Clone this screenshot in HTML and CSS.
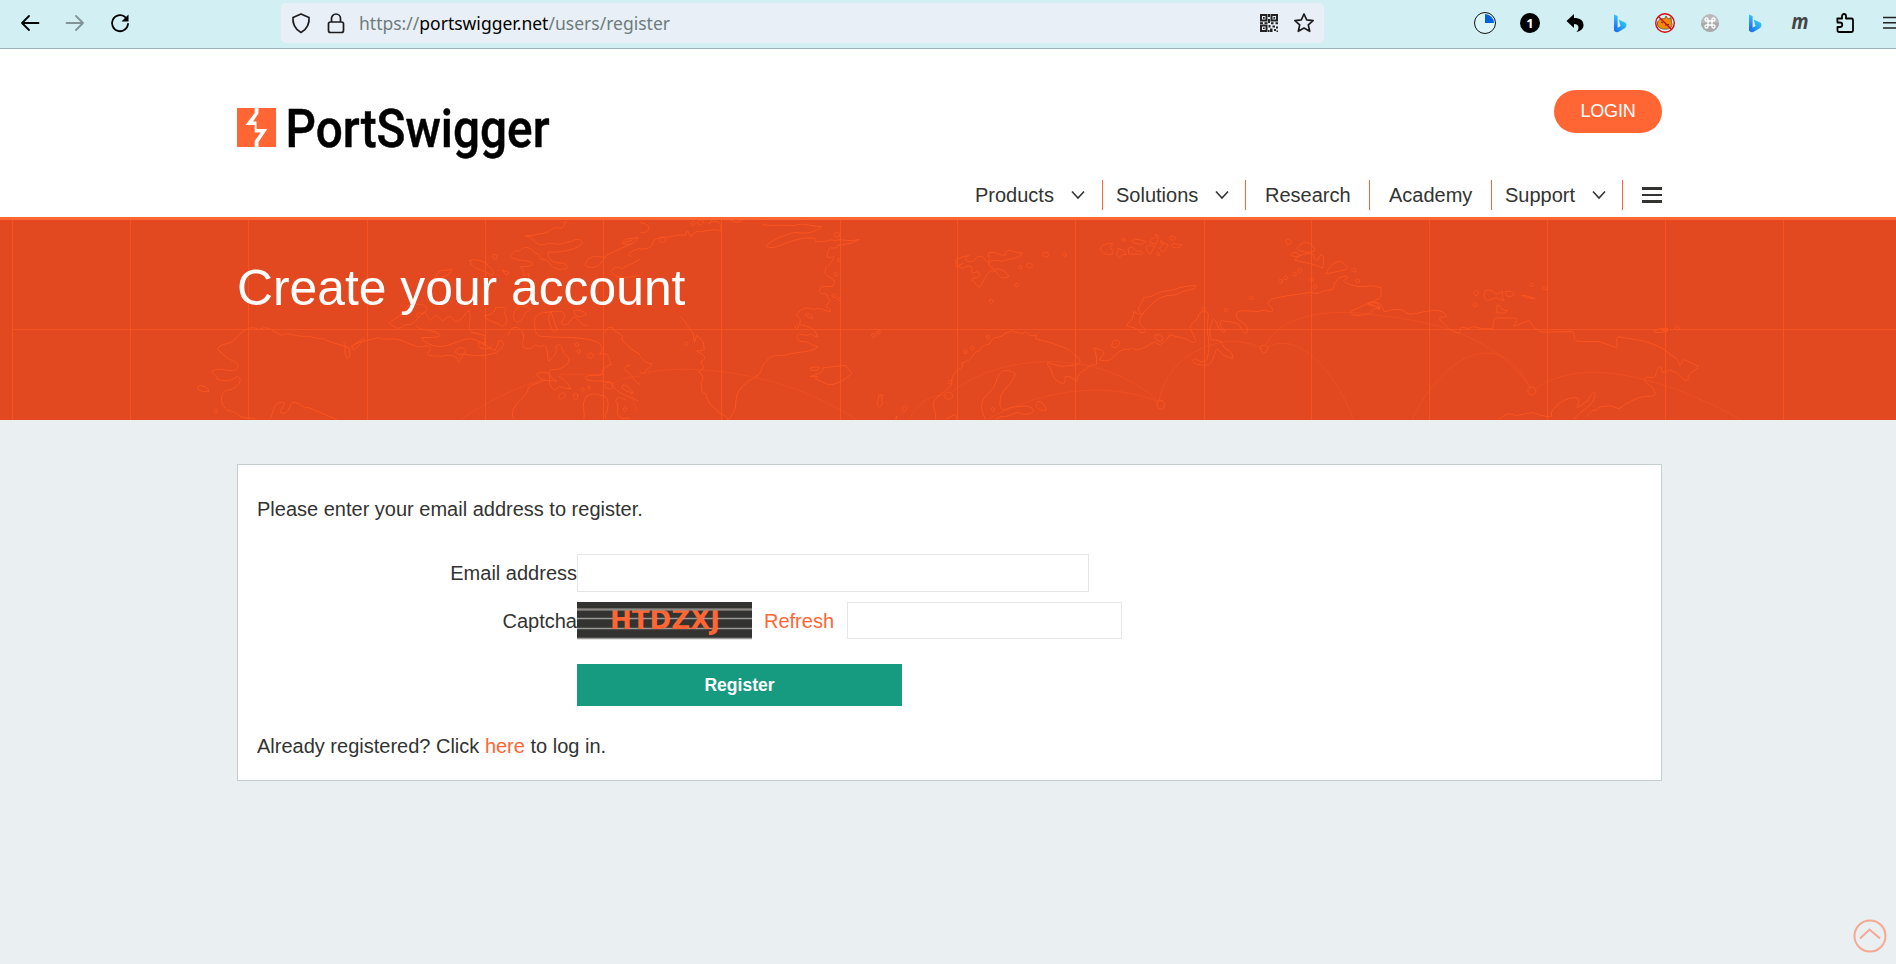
FILE: index.html
```html
<!DOCTYPE html>
<html lang="en">
<head>
<meta charset="utf-8">
<title>Create your account - PortSwigger</title>
<link rel="stylesheet" href="styles.css">
</head>
<body>
<svg class="defs" width="0" height="0">
  <defs>
    <linearGradient id="bingA" x1="0" y1="0" x2="0" y2="1"><stop offset="0" stop-color="#35c4ff"/><stop offset="1" stop-color="#1d5cf0"/></linearGradient>
    <linearGradient id="bingB" x1="1" y1="0" x2="0" y2="1"><stop offset="0" stop-color="#35d5f5"/><stop offset="1" stop-color="#1667f2"/></linearGradient>
    <symbol id="bing" viewBox="0 0 24 24"><path d="M6 3.600l3.600 1.300v12.600L6 20z" fill="url(#bingA)"/><path d="M11 8.800l6.200 2.600c1.200.6 1.400 1.700 1.200 3-.2 1.600-1.200 2.600-2.200 3.200l-5 3c-2.200 1.200-5.200.4-5.200-2.200l6.800-3.400-.8-1.600z" fill="url(#bingB)"/></symbol>
    <symbol id="caret" viewBox="0 0 14 10"><path d="M1 1.500l6 6.500 6-6.500" fill="none" stroke="#333332" stroke-width="1.600"/></symbol>
  </defs>
</svg>

<div class="toolbar">
  <div class="nav-buttons">
    <span class="slot"><svg width="24" height="24" viewBox="0 0 24 24" class="line"><path d="M20.500 12H4M11 5l-7 7 7 7"/></svg></span>
    <span class="slot"><svg width="24" height="24" viewBox="0 0 24 24" class="line muted"><path d="M3.500 12H20M13 5l7 7-7 7"/></svg></span>
    <span class="slot"><svg width="24" height="24" viewBox="0 0 24 24" class="line"><path d="M20 13a8 8 0 1 1-3.200-7.200L18.500 8"/><path d="M20.500 3.500v7h-7z" fill="#000" stroke="none"/></svg></span>
  </div>
  <div class="address">
    <svg class="shield" width="24" height="24" viewBox="0 0 24 24"><path d="M12 3l8 3.500c.6 5-1.500 11.500-8 15-6.500-3.500-8.600-10-8-15z"/></svg>
    <svg class="lock" width="24" height="24" viewBox="0 0 24 24"><path d="M7.500 11V7.500a4.500 4.500 0 0 1 9 0V11"/><rect x="4.500" y="11" width="15" height="10.500" rx="2"/></svg>
    <svg class="url" width="320" height="30" viewBox="0 0 320 30"><text x="0" y="21.500" textLength="311" lengthAdjust="spacingAndGlyphs">https://<tspan class="domain">portswigger.net</tspan>/users/register</text></svg>
    <svg class="qr" width="20" height="20" viewBox="0 0 20 20"><path d="M2 2h5.500v5.500H2zM12.500 2H18v5.500h-5.500zM2 12.500h5.500V18H2z" fill="none" stroke="#222" stroke-width="2"/><path d="M4 4h1.700v1.700H4zM14.400 4h1.700v1.700h-1.700zM4 14.400h1.700v1.700H4zM9 1h2v3H9zM9 6h2v4H9zM1 9.300h3v1.600H1zM5.500 9.300h3v1.600h-3zM12 9.300h2.500v2H12zM16.500 9.300H19v2h-2.500zM9.500 12h2v2.500h-2zM13.500 12.500H16v2h-2.500zM17 13.500h2v2h-2zM11 15.500h2.500v3.500H11zM15 16h2v2h-2zM17.500 17.500H19V19h-1.500zM9 17h1.500v2H9z" fill="#222"/></svg>
    <svg class="star" width="24" height="24" viewBox="0 0 24 24"><path d="M12 3l2.700 5.900 6.400.7-4.800 4.300 1.400 6.400L12 17.100l-5.700 3.200 1.400-6.400-4.800-4.300 6.400-.7z"/></svg>
  </div>
  <div class="extensions">
    <span class="slot"><svg width="24" height="24" viewBox="0 0 24 24"><circle cx="12" cy="12" r="10.500" fill="#dcf5f8" stroke="#111" stroke-width="1"/><path d="M12 12V3a9 9 0 0 1 9 9z" fill="#0061e0"/></svg></span>
    <span class="slot"><svg width="24" height="24" viewBox="0 0 24 24"><circle cx="12" cy="12" r="10" fill="#000"/><text x="12" y="16.800" class="count">1</text></svg></span>
    <span class="slot"><svg width="24" height="24" viewBox="0 0 24 24"><path d="M3.500 10l7.500-7v4c6 0 9.500 2.500 9.500 7 0 3-1.500 5.500-7 7 3-3 3-8-2.500-8v4z" fill="#000"/></svg></span>
    <span class="slot"><svg width="24" height="24"><use href="#bing"/></svg></span>
    <span class="slot"><svg width="24" height="24" viewBox="0 0 24 24"><path d="M4.500 11c2-3 5-4 7-3l1.500-3 2 3 3-1.500.5 5c1.500 3-.5 6-4.500 6.500-5 .6-8.500-1-9.500-4z" fill="#f28a0d" stroke="#784716" stroke-width=".8"/><path d="M12 14l4-.5M8 11l2 1" stroke="#553018"/><circle cx="12" cy="12" r="9.300" fill="none" stroke="#d40b12" stroke-width="1.400"/><path d="M5.500 5.500l13 13" stroke="#d40b12" stroke-width="1.400"/></svg></span>
    <span class="slot"><svg width="24" height="24" viewBox="0 0 24 24"><circle cx="12" cy="12" r="9" fill="#b9b9b9"/><path d="M3 12a9 9 0 0 0 18 0z" fill="#a9a9a9"/><path d="M10 10H8.500A1.500 1.500 0 1 1 10 8.500v7A1.500 1.500 0 1 1 8.500 14h7a1.500 1.500 0 1 1-1.500 1.500v-7a1.500 1.500 0 1 1 1.500 1.500H10" fill="none" stroke="#fff" stroke-width="1.400"/></svg></span>
    <span class="slot"><svg width="24" height="24"><use href="#bing"/></svg></span>
    <span class="slot"><svg width="24" height="24" viewBox="0 0 24 24"><text x="12" y="18" class="letter-m" textLength="17" lengthAdjust="spacingAndGlyphs">m</text></svg></span>
    <span class="slot"><svg width="24" height="24" viewBox="0 0 24 24" class="line"><path d="M4.300 7.500h4.700V5a2 2 0 0 1 4 0v2.500h5.500a1.500 1.500 0 0 1 1.500 1.500v10.500a1.500 1.500 0 0 1-1.500 1.500H6a1.500 1.500 0 0 1-1.500-1.500V16H7a2.200 2.200 0 0 0 0-4.500H4.500z"/></svg></span>
    <span class="slot"><svg width="18" height="24" viewBox="0 0 18 24"><path d="M0 6.500h18M0 11.800h18M0 17h18" stroke="#222" stroke-width="1.500"/></svg></span>
  </div>
</div>

<header class="header">
  <div class="container header-inner">
    <a class="logo" aria-label="PortSwigger">
      <svg width="330" height="76" viewBox="0 0 330 76">
        <rect y="6" width="39" height="39" fill="#ff6633"/>
        <path d="M17.700 6h3.800v5.500L16 19.500h3.500V27h10.700L21.500 40v5h-3.800v-6l6-8.500h-6v-7.500H8.500l9.200-12z" fill="#fff"/>
        <text x="48.500" y="45" class="wordmark" textLength="264" lengthAdjust="spacingAndGlyphs">PortSwigger</text>
      </svg>
    </a>
    <div class="header-right">
      <a class="login">LOGIN</a>
      <nav class="menu">
        <a class="item products">Products<svg class="caret" width="14" height="10"><use href="#caret"/></svg></a>
        <a class="item solutions">Solutions<svg class="caret" width="14" height="10"><use href="#caret"/></svg></a>
        <a class="item research">Research</a>
        <a class="item academy">Academy</a>
        <a class="item support">Support<svg class="caret" width="14" height="10"><use href="#caret"/></svg></a>
        <span class="burger"><i></i><i></i><i></i></span>
      </nav>
    </div>
  </div>
</header>

<section class="hero">
  <svg class="map" width="1896" height="200" viewBox="0 220 1896 200">
    <path class="grid-line" d="M12.500 329.500H1896M12.500 220v200M130.500 220v200M248.500 220v200M367.500 220v200M485.500 220v200M603.500 220v200M721.500 220v200M840.500 220v200M957.500 220v200M1075.500 220v200M1204.500 220v200M1311.500 220v200M1429.500 220v200M1547.500 220v200M1665.500 220v200M1783.500 220v200"/>
    <g transform="translate(0 210) scale(.4082 .3333)">
      <path class="coast" d="M625 628c-10-8-25 0-35-8s-20-20-30-17c-25-20-20-55-5-62 20 0 45-30 27-42-20 20-40 13-50 8-2-15-20-18-10-26 15-10 35 5 55-1 20-20-10-26-22-38l-23-25c10-20 30-12 40-25 18-25 40-50 62-33 22-15 30 3 55 17 20-12 25 5 70 3 20 10 30 2 40 12l55 22c6 20 4 30-4 32-10-20 0-30-8-48M860 410l30-25c8 0-8 18-20 32-12 6-10-10 10-20l48-14c15 10 35-2 55 8s35 20 50 20c18-10 25 5 20 10-15 20 10 16 30 18 20-8 38 1 38 10 0 20 5 0 20-26-2-8-8-12-20-8-10 15-5 20 20 18 25 8 70 3 80-10 20-20 13-30 2-32l-10 30c-20-5-25-30-42-22-3 20 30 25 35 5"/>
      <path class="coast" d="M660 628c10-10 8-50 25-50 25-5 0 20 2 30 20 10 20-20 30-30 20-3 20 18 40 15l68 36M484 530c10-8 30 4 27 15-20 1-28-6-27-15zM525 600c5-5 10 0 7 7-6 5-10-2-7-7zM1026 322c-15-5 0-20 10-10 20-20 6-30-18-29-30-1-17 15-35 30-20 20-40 25-20 35 20 20 26-10 37-4 15 1 20-20 40-38 10 10 10 40 22 15 15-15 20 28 28 5 20-20 20 15 30 8 15-5 20-30 30-32 6 30-8 50 5 65l35 10c-4 10-5 20 0 32-40-45-60-10-105 0-25 2-45-10-53-26 50 0 55-5 35-17-20-8-40-5-48-20"/>
      <path class="coast" d="M1388 32c-10 10-2 25-20 22-20-5-20 18-45 17-15 5-20 7-37 6 20 5 20 15 30 24 20 10 20-5 40 0 20 5 25-4 45-7 15-15 35 0 20 12-15 15-50 22-78 20-3 20 10 35 35 33 20 10 15 20-10 19-30-10-15-25-38-30-10-2-5-15-20-20-30-40-35 10-45-8-15 20-20 20 5 30 40 2 50 20 5 20 20 30-5 35 20 20 5 30-18 40-6 45 5 5 15 15 25 13M1150 152c20-8 40 4 50 20 15 20 15 30-10 15s-30-10-40-35zM1076 183l30-5c-2 25-30 20-50 35 10-10 15-18 20-30zM1207 135c8-8 15 9 8 13-6 0-10-8-8-13zM1230 180l18 8-8 8zM1215 292c25-1 30 3 20 15 8 20 12 30-5 43-10-15-40-15-43-33 10-3 20 0 28-25zM1267 293c15-8 50 0 20 15-5 20-20 40-27 20-5-15 0-25 7-35zM1405 300c15-2 25 5 33 12-15 10-30 15-33-12zM1350 305l15 55c-5 10-10 10-15-10-10-20-5-35 0-45zM1310 345c-5-20 5-38 30-38 40-10 55 3 35 28 0 10 10 15 20 1 20-40 20 18 45 9M1310 345c0 20 5 35 18 34 40 5 80 0 120 11 30 10 33 28 20 43 30-8 20 15 30 30-25 10-25 25-20 30-20 8-40-2-45 10 10 20 50 0 65 20 15 30 35 30 65 50M1246 375c5-30 25-30 35-5 5 25 0 20-2 30 0 20 15 15 20 16 20-20 10-10 25-5 20-20 15 30 20 42 20-20 20-30 18-45 20-15 10 25 32 35 5 25-30 40-43 35-15 10 2 30 13 35-20-3-35 5-50-20 10-10 30-7 33 3 0 20-5 30 12 45 15-20 10-5 40-5-10-20-15-25-30-38M1335 508c-8 13-30 11-40 25-5 30-30 40-38 67-2 10-3 20 3 28M1430 628c5-30-10-40 8-70 15-10 25-5 35-2 20 0 20 35 10 60 0 10 5 10 2 12M1545 628c-5-10-20 5-30-10-8-10 5-30-7-45 10-20 15-5 25-5"/>
      <path class="coast" d="M1436 155c-10 18 15 18 20 17 20-10 25-30 30-37 20-10 50-30 65-35M1525 100c5-20 15-10 38-18-5 15-20 28-38 18zM1530 97l20-7M1568 115c-20 7-40 20-20 24M1436 155c10-20 25-15 45-13M1495 185c10-10 15-20 28-8 10-10 20-10 45-30M1498 187c20 20 25 20 70 8M1480 365c10 5 0-15 20-13 0 15 15 10 25 27-5 15 10 20 18 35l25 20M1545 465c-20 5-18 15-5 23 10 10 15 30 28 35M1525 525c15 0 20 15 27 25-20-8-30-10-27-25z"/>
      <path class="coast" d="M1410 400c8-6 10 8 3 10-5-2-5-6-3-10zM1415 420c8-6 10 8 3 10-5-2-5-6-3-10zM1442 432c12-10 16 8 6 13-8-2-12-8-6-13zM1370 555c10-12 20-4 13 5-10 13-20 5-13-5zM1406 553c5-8 10 0 9 10-3 12-11 10-9-10zM1425 535c5-3 8 0 5 8-7 3-9-3-5-8zM1440 530c5-4 8 0 6 6-6 4-8-1-6-6zM1490 515c15 0 15 20 3 22-15 0-12-20-3-22zM1528 595c8-5 10 5 4 10-6-2-6-6-4-10z"/>
      <path class="coast route" d="M1130 628c60-50 130-95 205-120M1370 493h105M1500 520c20-12 40-20 68-22M1545 545l15 60"/>
    </g>
    <g transform="translate(640 210) scale(.4017 .3333)">
      <path class="coast" d="M0 38c20 2 25 15 20 23-10 10-15 5-20 8M0 117c25 0 30-5 32-22 15-20 30-10 45-15 20-5 30-8 35-2 10-30 5-10 15 2 15-25 20-10 35-17 20-5 30-5 40 0V45c-10-15-20-15-30-3 0-8 10-10 7-12M50 85c10-8 20 4 12 10-10 5-18-2-12-10zM128 37c10-8 12 6 6 9-6 1-8-5-6-9zM147 32c12-6 15 5 6 11-10 2-12-5-6-11zM225 30l15 7 15-7M302 40c5 10 40 3 80 7 30-10 30 0 70 3-20 20-40 22-65 17-25 5-70 30-72 42 10 8 25 2 45-8 35-15 50-20 77-16 5 10-10 15 12 8 10 8 25-10 35 0 20-10 30 5 62-5-20 15-45 15-55 20 5 5-8 8-18 5-10 15-5 25-8 28 20 5 18-10 17 5-5 15-20 25-20 30-5 20 5 20 10 26 20 10 10 20 8 28-20 0-30-5-34 12 10 20 15 0 20 15 0 10 15 15 0 24-5 20 10 10 8 24-20-5-30-15-40-6-20-10-30-5-45 15 10 15 12 8 8 30 20 5 40 8 45 37-20-5-5-10-30-5-30-10-22 10-15 18 30 0 25 12 46 16-20 20-40 12-80 25-30 5-30-5-50 20-10 10-10 30-15 35-20 25-25 10-50 50-15 20-5 60-17 70-10 20-10 20-12 20-5-20-15-10-28-30-20-20-20-20-28-50-15 3-5-20-12-30 10-15 5-25-5-35 20-10 10-20 5-30 20-12 5-22-10-32 10-2 22 0 18-12 2-20-15-30-18-35l-5 20c-5-10 0-15-5-30-20-20-10-25-30-45"/>
      <path class="coast" d="M413 312c10-5 15 8 18 13-10 0-18-5-18-13zM387 347c5-8 10 0 6 8-8 0-8-5-6-8zM484 70c8-8 15 0 12 8-8 8-15 0-12-8zM493 147c8-3 10 5 3 8-5-2-5-5-3-8zM483 190c7-8 12 4 5 8-5 1-6-4-5-8zM478 256c5-10 12 0 8 6-5 2-7-2-8-6zM493 265c7-4 9 3 4 8-5-1-6-4-4-8zM110 400c5-8 12-3 9 5-5 3-9 0-9-5zM0 440c10 8 5 15 30 22-5 15-15 12-17 25-8 8-10-2-13-5M423 480c0-8 15-12 24-7-2 10-15 10-24 7zM423 500c20-10 35-10 32-26 20-3 30-5 57-8l15 25c-10 10-20 22-45 32-20 5-25-10-45-15 0-10 10-2 5-8zM595 557l8-3-1 18c5 8-5 30-13 10 5-10 3-15 6-25zM655 590c8-8 15 8 3 14-5-2-8-8-3-14zM577 373c8-6 13 4 5 9-6 0-7-5-5-9zM590 364c7-6 12 3 5 7-7-1-8-3-5-7z"/>
      <path class="coast" d="M787 150c15-12 20-10 32-13-20 10-2 20 7 18 10-2 5-16 20-15 10-3 10 10 20 18 10-15-5-20 3-30 20-3 25 8 40 8 5-30 20-5 43-7-10 20-30 15-50 25-20-3-20-5-30 0l-5 10 16 15c20-10 35 20 35 20-12 10-20 3-25-2-5-18-20-15-20-15-20 25-15 30-28 50-15-10-10-20-20-20-5-10 30-5 18-25-10-5-15 10-18-2 10-20-15-20-20-10-20-3-20-20-18-25zM785 170l20-10M1002 130c8-8 18 0 15 7-5 10-18 0-15-7zM1052 130c5-6 12 1 8 8-7 3-9-4-8-8zM963 163c10-10 18 4 10 10-8 2-12-4-10-10zM943 169c5-9 12 3 5 9-5 0-6-5-5-9zM934 222c8-6 12 5 4 9-5-1-5-5-4-9zM870 271c6-8 12 4 5 9-5-1-6-5-5-9zM1145 118c5-15 15-18 32-17-15 12 5 20 0 30-15 10-25-5-32-13zM1190 115c15 5 20 12 20 20-15-8-15 20-23 0-5-5 5-10 3-20zM1215 115c20-10 12 14 32 8 20 15-20 7-30 10zM1260 112c5-10 10-5 22-3-5 10-8 18-13 24-8-5-5-15-9-21zM1225 95c0-15 20-5 35 0-10 10-20 10-35 0zM1269 98c5-20 15-5 15-25 10 5 5 15 0 30zM1293 115c15-20 10-15 22-10-5 10-10 22-15 20zM1323 106c10-12 10 0 26-2-3 10-20 15-26 2zM1320 80c10-5 18 4 10 10-10 1-13-5-10-10zM1295 93c8-5 10 8 3 9zM1200 87c6-6 12 2 8 8-7 1-8-4-8-8zM1286 130c5-5 10 2 6 8-6 0-7-4-6-8z"/>
      <path class="coast" d="M1254 262c30 0 30-20 65-20 20-5 30-15 65-15 0 15-20 7-50 28-40 0-50 15-75 45-20 30-15 30-15 42 20 20 20 30 0 24-15-20-20-10-32-20 12-20 15-12 17-42 10 10 15 8 21 10-20-20 0-30 4-52zM735 628c5-20-15-50 5-65 20-25 18-15 25-28 20-12 5-15 15-40 10-20 30-20 20-35 40-15 20-30 45-38 10-20 15-15 25-20 10-30 20-12 35-28 10-10 12-5 20-12 15 10 10 0 25 10 20-20 10 15 38 3-15 20 20 12 50 30 40 15 30 20 55 40 10 20-10 20-40 24-25-2-45-20-37-3 15 20 5 35 27 50 20 15 15-15 15-15 10-8 25 10 30 13 0-30 15-25 30-45 10-10 15 0 18-5 3-30-5-40-5-50 25 8 32 12 12 35 35 15 35-20 60-30 30 0 15-10 28 0 20 5 50-30 55-20 5 15 30-10 32-25 30 10 40 10 55 22 20 10 5-20-3-40 0-25 15-15 20-38 5-20 25-20 25 0-10 60 10 70-3 130-10 10-15 10-32-3-10 10-2 18 20 20 30 10 30-50 38-48 10 15 15 22 38 28 0-30-25-20-28-50-12-8-20-2-28-6 0-20-5-30 3-48 5-25 10-10 18 15 10 10 15 15 15 6-15-15-15-30-5-30 20 8 38-2 46 25 5 10 10 20 15 5 0-30-25-20-28-50 5-15 30-8 60-7"/>
      <path class="coast" d="M860 628c-10-20-15-50 0-70 15-18 20-20 27-45 10-40 30-35 47-22-5 30-35 50-37 72 0 20-5 25 8 38 20-10 20-10 40-11 15-5 30 0 35 11 0 10-20 15-30 10-20-10-20 10-55 10l-10 7M762 628c5-5 10-5 20-15 10 8 5 10 7 15M635 628l5-10-2 10M990 575c10-5 18 15 22 25-15 5-35-8-22-25zM875 595c5-5 9 0 7 7-5 5-9-2-7-7zM862 378c6-6 11 3 6 9-5 0-7-4-6-9zM823 411c6-8 12 3 6 8-6 0-7-4-6-8zM807 423c6-8 12 3 5 8-6 0-7-4-5-8zM769 514c6-7 12 3 5 8-6 0-7-4-5-8zM760 550c10-10 22 3 17 13-8 10-22 5-17-13zM1177 395c15-10 20 0 14 12-8 8-22 10-14-12zM1282 375c15-5 22 8 18 18-10 2-20-5-18-18zM1287 576c15-10 20 0 18 15-3 10-20 10-18-15zM1400 293c5-6 11 3 5 8-5 0-7-4-5-8zM1455 298c5-6 12 3 5 8-6 0-7-4-5-8zM1519 260c5-6 12 3 5 8-6 0-7-4-5-8z"/>
      <path class="coast route" d="M0 492c100-30 250-10 370 38 60 25 110 55 168 98M670 628c20-45 50-75 90-72M777 545c130-120 370-130 515 30M865 628c120-80 280-120 422-55M1292 575c10-80 60-145 130-170 50-20 90-10 125 10"/>
    </g>
    <g transform="translate(1260 210) scale(.4056 .3333)">
      <path class="coast" d="M0 302c20-3 30 10 30 0 5-15-25-15 0-35 30-10 70-15 97-20 20 10 20-5 45-7 20-3 0-10 22-35 10-8 25-10 22-1-20 10-5 15 15 23 40 10 30-10 70 8-8 10 5 20-10 33-20 10-20 10-65 35-10 15 20 15 30 11 30-2 10-20 40-20-20-10-35-8-30-15 20-5 30 5 30 20-10-5-10-15-30-18 10-5 30-15 40 24 15-2 20-10 45-5 20 25 35 5 60 5 20-10 50 0 48 15-10 5-20-5-15 10 15 15 20 30 45 40 10-5 0-20 12-18 20 10 20-8 35 1 15 5 20 3 37 3 10-30-5-25 12-32h45c5 10 0 15-5 23 10 3 20-10 38-15 10 5 5 20 20 26 10 10 15 8 30 8l55-1c15 5-5 30 25 30h45l40 18c8-10-5-20 5-33 40 10 90 10 130 55 20 10 20 30 23 32 5-5 0-10 10-18l35 20c-5 15-20 15-23 26-8 10 5 8-8 18-20-20-20-25-40-33l-17 8c-5-10-2-15-8-20-15 30-5 30-18 35-25-5-20 5-15 15 10 10 20 15 23 35-15 15-30-10-90 43l-20-8c-30 0-30 5-35 13-15-5-20 15-25 20"/>
      <path class="coast" d="M588 628c10-5 20-25 40-12 15 0 25-5 45-8 15 5 30 15 47 10-10-10 20-50 50-55 30 0 10 15 12 30 15-10 20-20 27-20 10-30 20-35 17-15-5 30-35 45-53 70M90 115c10-15 20-18 25-18 15 5 20 15 20 25-15 10-40 2-45-7zM75 133c8-10 20-5 22 2 0 7-15 7-22-2zM85 150c15-20 30-20 45-18 2 5 5 20 10 20l12-20c8 10 5 30 2 43-20-15-40-15-69-25zM163 191c5-15 15-35 35-37 15 10 20 20 15 25-20 5-30 8-50 12zM65 90c8-6 15 3 10 12-8 4-14-5-10-12zM47 210c5-7 12 3 6 9-7 0-9-4-6-9zM60 200c5-7 12 3 6 9-7 0-9-4-6-9zM81 189c5-7 12 3 6 9-7 0-9-4-6-9zM94 178c5-7 12 3 6 9-7 0-9-4-6-9zM124 205c5-7 12 3 6 9-7 0-9-4-6-9zM132 226c5-7 12 3 6 9-7 0-9-4-6-9zM228 177c5-7 12 3 6 9-7 0-9-4-6-9zM237 210c5-7 12 3 6 9-7 0-9-4-6-9zM530 243c8-5 12 8 5 14-8 0-8-8-5-14zM527 281c5-7 12 3 6 9-7 0-9-4-6-9zM555 242c10-5 20 0 25 10 15 0 10-5 17-8 2 10-3 15 5 27-20 0-10-15-35-1-10 5-20-10-12-28zM605 245c15-3 20 2 22 8-15 15-20 5-22-8zM645 256c15 0 20 5 33 10-15 0-25-5-33-10zM585 285c10 0 5 15 25 17-5 10-20 8-27 5 3-10 0-15 2-22zM666 221c5-7 12 3 6 9-7 0-9-4-6-9zM699 231c5-7 12 3 6 9-7 0-9-4-6-9zM971 365c10-10 20-10 35-10l-15 7h15c-10 8-30 6-35 3zM1026 351c5-7 12 3 6 9-7 0-9-4-6-9zM1 410c8-10 20 0 18 8-5 20-20 5-18-8zM662 535c10-10 20 0 18 10-8 20-25 5-18-10z"/>
      <path class="coast route" d="M12 408c40-100 170-115 290-90 160 20 290 80 365 215M20 412c70-50 160 60 211 216M375 628c80-200 220-280 290-95M680 535c120-100 320-30 505 93"/>
    </g>
  </svg>
  <div class="container"><h1>Create your account</h1></div>
</section>

<main class="container">
  <section class="card">
    <p class="intro">Please enter your email address to register.</p>
    <form class="form">
      <label for="email">Email address</label>
      <div class="field"><input id="email" class="input email" type="text"></div>
      <label for="captcha">Captcha</label>
      <div class="field captcha-row">
        <svg class="captcha" width="175" height="37" viewBox="0 0 175 37">
          <rect width="175" height="37" fill="#333332"/>
          <path d="M0 7.500h175M0 16.500h175M0 26.500h175M0 36.500h175" stroke="#999996" stroke-width="1.700"/>
          <text x="33" y="27.300" textLength="110" lengthAdjust="spacingAndGlyphs" class="captcha-text">HTDZXJ</text>
          <path d="M0 7.500h175" stroke="#8b8983" stroke-width="2"/>
        </svg>
        <a class="link refresh">Refresh</a>
        <input id="captcha" class="input code" type="text">
      </div>
    </form>
    <button class="register" type="button">Register</button>
    <p class="signin">Already registered? Click <a class="link">here</a> to log in.</p>
  </section>
</main>

<a class="to-top" aria-label="Back to top"><svg width="34" height="34" viewBox="0 0 34 34"><circle cx="17" cy="17" r="15.500"/><path d="M7 19.500L16.500 10.500 27 19.500"/></svg></a>
</body>
</html>
```
FILE: styles.css
```css
* { box-sizing: border-box; }
body {
  margin: 0;
  height: 964px;
  overflow: hidden;
  background: #eaeff2;
  color: #333332;
  font: 20px/26px "Liberation Sans", Arial, sans-serif;
}
svg { display: block; flex: none; overflow: visible; }
p, h1 { margin: 0; }
.defs { position: absolute; }
.container { width: 1425px; margin-left: 237px; }

/* Browser toolbar */
.toolbar {
  display: flex;
  height: 49px;
  padding: 3px 0 0 7px;
  background: #d2eff3;
  border-bottom: 1px solid #9db1b6;
  overflow: hidden;
}
.nav-buttons, .extensions { display: flex; flex: none; height: 40px; }
.nav-buttons { width: 274px; }
.slot { display: flex; width: 45px; flex: none; align-items: center; justify-content: center; }
.extensions .slot:last-child svg { margin-left: 4px; }
.line { fill: none; stroke: #000; stroke-width: 1.8; stroke-linecap: round; stroke-linejoin: round; }
.muted { stroke: #819598; }
.address {
  display: flex;
  flex: none;
  align-items: center;
  width: 1043px;
  height: 40px;
  padding-left: 8px;
  border-radius: 5px;
  background: #e9eff6;
}
.shield, .lock, .star { fill: none; stroke: #1c1c1e; stroke-width: 1.7; stroke-linejoin: round; }
.lock { margin-left: 11px; }
.url { margin-left: 11px; font: 18px "Noto Sans", sans-serif; fill: #6d7c7c; }
.domain { fill: #000; }
.qr { margin-left: 580px; }
.star { margin-left: 13px; }
.extensions { margin-left: 138px; }
.count { fill: #fff; font: bold 13px "Noto Sans", sans-serif; text-anchor: middle; }
.letter-m { fill: #444; font: italic bold 21px "Noto Sans", sans-serif; text-anchor: middle; }

/* Site header */
.header { height: 171px; background: #fff; border-bottom: 3px solid #ff6633; }
.header-inner { display: flex; justify-content: space-between; }
.logo { padding-top: 53px; }
.wordmark { fill: #000; stroke: #000; stroke-width: .5; font: 500 54px Roboto, sans-serif; }
.header-right { display: flex; flex-direction: column; align-items: flex-end; padding-top: 41px; }
.login {
  width: 108px;
  height: 43px;
  border-radius: 22px;
  background: #ff6633;
  color: #fff;
  font-size: 18px;
  letter-spacing: -0.2px;
  line-height: 43px;
  text-align: center;
}
.menu { display: flex; margin-top: 47px; height: 30px; line-height: 30px; }
.item { display: flex; align-items: center; border-right: 1px solid #ff6633; padding-left: 13px; }
.caret { margin-left: 17px; }
.products { width: 128px; padding-left: 0; }
.solutions { width: 143px; }
.research { width: 124px; padding-left: 19px; }
.academy { width: 122px; padding-left: 19px; }
.support { width: 131px; }
.burger { display: flex; flex-direction: column; gap: 3px; width: 39px; padding: 7px 0 0 19px; }
.burger i { height: 3px; background: #333332; }
.burger i + i { height: 2px; margin-top: 1px; }
.burger i:last-child { height: 3px; }

/* Hero */
.hero { display: grid; height: 200px; background: #e24920; }
.hero > * { grid-area: 1 / 1; }
.map { overflow: hidden; }
.grid-line, .coast { fill: none; stroke: #ff5722; stroke-width: 1; vector-effect: non-scaling-stroke; }
.grid-line { opacity: .75; }
.coast { opacity: .95; stroke-linejoin: round; }
.route { opacity: .45; }
h1 { position: relative; padding-top: 38px; color: #fff; font-size: 49.8px; line-height: 60px; font-weight: 400; }

/* Registration card */
.card { height: 317px; margin-top: 44px; padding: 31px 19px 0; background: #fff; border: 1px solid #c5cfcf; }
.form { display: grid; grid-template-columns: 320px 1fr; row-gap: 10px; margin-top: 32px; }
.form label { text-align: right; line-height: 38px; }
.field { display: flex; }
.input { border: 1px solid #e5e6e6; background: #fff; font: inherit; outline: 0; padding: 0 8px; }
.email { width: 512px; height: 38px; }
.code { width: 275px; height: 37px; margin-left: auto; }
.captcha-row { width: 545px; height: 37px; }
.captcha-text { fill: #ff6633; font: bold 26px "DejaVu Sans", sans-serif; }
.link { color: #ff6633; }
.refresh { margin-left: 12px; line-height: 38px; }
.register {
  display: block;
  width: 325px;
  height: 42px;
  margin: 24px 0 0 320px;
  border: 0;
  padding: 0;
  background: #169b80;
  color: #fff;
  font: bold 17.5px "Liberation Sans", Arial, sans-serif;
}
.signin { margin-top: 27px; }

.to-top { position: absolute; left: 1853px; top: 919px; }
.to-top svg { fill: none; stroke: #f8a790; stroke-width: 2; }
```
